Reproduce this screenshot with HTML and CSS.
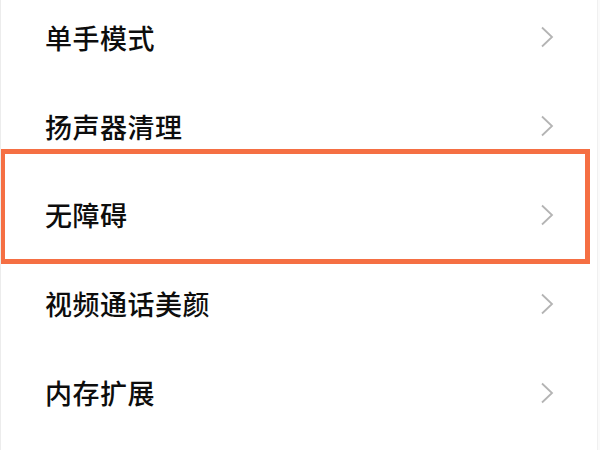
FILE: index.html
```html
<!DOCTYPE html>
<html lang="zh">
<head>
<meta charset="utf-8">
<link rel="stylesheet" href="styles.css">
</head>
<body>
<div class="screen">
  <ul class="list">
    <li class="row"><span class="label">单手模式</span><svg class="chev" viewBox="0 0 14 22"><path d="M2 1.5 L12 11 L2 20.5"/></svg></li>
    <li class="row"><span class="label">扬声器清理</span><svg class="chev" viewBox="0 0 14 22"><path d="M2 1.5 L12 11 L2 20.5"/></svg></li>
    <li class="row"><span class="label">无障碍</span><svg class="chev" viewBox="0 0 14 22"><path d="M2 1.5 L12 11 L2 20.5"/></svg></li>
    <li class="row"><span class="label">视频通话美颜</span><svg class="chev" viewBox="0 0 14 22"><path d="M2 1.5 L12 11 L2 20.5"/></svg></li>
    <li class="row"><span class="label">内存扩展</span><svg class="chev" viewBox="0 0 14 22"><path d="M2 1.5 L12 11 L2 20.5"/></svg></li>
  </ul>
  <div class="highlight"></div>
</div>
</body>
</html>
```
FILE: styles.css
```css
html, body {
  margin: 0;
  padding: 0;
  background: #fafafa;
}
body {
  width: 600px;
  height: 450px;
  overflow: hidden;
  font-family: "Noto Sans CJK SC", "Noto Sans", sans-serif;
}
.screen {
  position: relative;
  width: 596px;
  height: 450px;
  background: #ffffff;
  border-left: 1px solid #ececec;
  border-right: 1px solid #f0f0f0;
  overflow: hidden;
}
.list {
  list-style: none;
  margin: -7px 0 0 0;
  padding: 0;
}
.row {
  height: 88.8px;
  display: flex;
  align-items: center;
  justify-content: space-between;
  padding: 0 43px 0 44px;
}
.label {
  font-size: 27px;
  color: #0d0d0d;
  font-weight: 500;
  letter-spacing: 0.5px;
}
.chev {
  width: 14px;
  height: 22px;
  fill: none;
  stroke: #b4b4b4;
  stroke-width: 1.8;
  stroke-linejoin: miter;
}
.highlight {
  position: absolute;
  left: -1px;
  top: 149px;
  width: 580px;
  height: 105px;
  border: 5px solid #f56f43;
}
```
